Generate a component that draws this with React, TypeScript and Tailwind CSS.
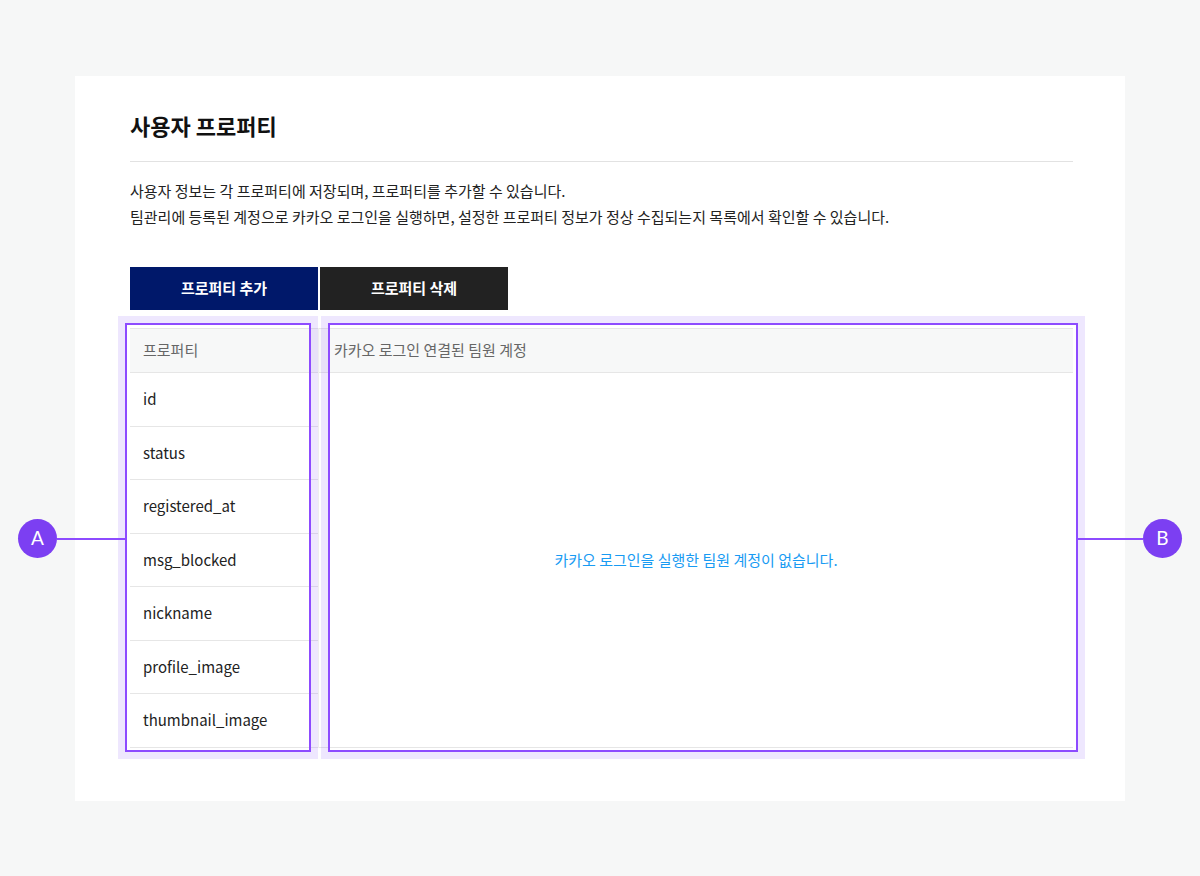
const properties = [
  "id",
  "status",
  "registered_at",
  "msg_blocked",
  "nickname",
  "profile_image",
  "thumbnail_image",
];

function Callout({ label }: { label: string }) {
  return (
    <div className="w-[39px] h-[39px] rounded-full bg-[#7c3ff2] flex items-center justify-center text-white text-[19px] font-['Lato',sans-serif]">
      {label}
    </div>
  );
}

function App() {
  return (
    <div className="min-h-[876px] w-full bg-[#f6f7f7] pt-[76px] pb-[75px] font-['Noto_Sans_CJK_KR','Noto_Sans',sans-serif]">
      <div className="mx-auto w-[1050px] bg-white pl-[55px] pr-[52px] pt-[34px] pb-[53px]">
        <h2 className="text-[22px] leading-[30px] font-bold text-[#111]">사용자 프로퍼티</h2>
        <div className="mt-[21px] h-px bg-[#e2e2e2]" />
        <div className="mt-[16px] text-[15px] leading-[26px] text-[#222]">
          <p>사용자 정보는 각 프로퍼티에 저장되며, 프로퍼티를 추가할 수 있습니다.</p>
          <p>팀관리에 등록된 계정으로 카카오 로그인을 실행하면, 설정한 프로퍼티 정보가 정상 수집되는지 목록에서 확인할 수 있습니다.</p>
        </div>

        <div className="mt-[37px] flex gap-[2px]">
          <button className="w-[188px] h-[43px] bg-[#00186a] text-white text-[15px] font-bold">
            프로퍼티 추가
          </button>
          <button className="w-[188px] h-[43px] bg-[#222222] text-white text-[15px] font-bold">
            프로퍼티 삭제
          </button>
        </div>

        <div className="relative mt-[18px] flex">
          <div className="w-[189px] border-r border-[#eeeeee]">
            <div className="h-[45px] flex items-center pl-[13px] bg-[#f7f8f8] border-y border-[#e6e6e6] text-[15px] text-[#666]">
              프로퍼티
            </div>
            {properties.map((p) => (
              <div
                key={p}
                className="h-[53.5px] flex items-center pl-[13px] border-b border-[#e6e6e6] text-[15px] text-[#222]"
              >
                {p}
              </div>
            ))}
          </div>
          <div className="flex-1 flex flex-col border-b border-[#e6e6e6]">
            <div className="h-[45px] flex items-center pl-[15px] bg-[#f7f8f8] border-y border-[#e6e6e6] text-[15px] text-[#666]">
              카카오 로그인 연결된 팀원 계정
            </div>
            <div className="flex-1 flex items-center justify-center text-[15px] text-[#189bf3]">
              카카오 로그인을 실행한 팀원 계정이 없습니다.
            </div>
          </div>

          {/* annotation A */}
          <div className="absolute left-[-12px] top-[-12px] w-[200px] h-[443px] border-[7px] border-[#8b5cf6]/15">
            <div className="w-full h-full border-2 border-[#8d4bff]" />
          </div>
          {/* annotation B */}
          <div className="absolute left-[191px] top-[-12px] w-[764px] h-[443px] border-[7px] border-[#8b5cf6]/15">
            <div className="w-full h-full border-2 border-[#8d4bff]" />
          </div>

          <div className="absolute left-[-112px] top-[191px] flex items-center">
            <Callout label="A" />
            <div className="w-[68px] h-[2px] bg-[#8d4bff]" />
          </div>
          <div className="absolute left-[947px] top-[191px] flex items-center">
            <div className="w-[66px] h-[2px] bg-[#8d4bff]" />
            <Callout label="B" />
          </div>
        </div>
      </div>
    </div>
  );
}

export default App;
